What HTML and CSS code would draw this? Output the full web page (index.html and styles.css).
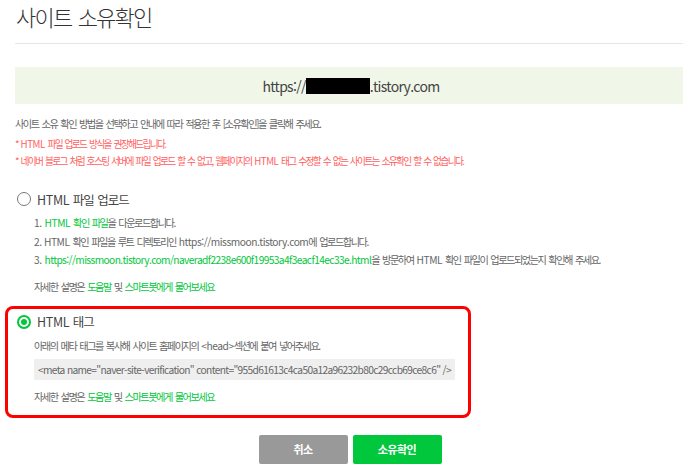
FILE: index.html
```html
<!DOCTYPE html>
<html lang="ko">
<head>
<meta charset="utf-8">
<link rel="stylesheet" href="styles.css">
</head>
<body>
<div class="page">
  <h1 class="title">사이트 소유확인</h1>
  <div class="site-box"><span class="en">https://</span><span class="redact"></span><span class="en">.tistory.com</span></div>
  <p class="desc">사이트 소유 확인 방법을 선택하고 안내에 따라 적용한 후 [소유확인]을 클릭해 주세요.</p>
  <p class="warn first">* <span class="en">HTML</span> 파일 업로드 방식을 권장해드립니다.</p>
  <p class="warn">* 네이버 블로그 처럼 호스팅 서버에 파일 업로드 할 수 없고, 웹페이지의 <span class="en">HTML</span> 태그 수정할 수 없는 사이트는 소유확인 할 수 없습니다.</p>

  <div class="option opt-file">
    <div class="opt-head"><span class="radio"></span><span class="opt-label"><span class="en">HTML</span> 파일 업로드</span></div>
    <div class="opt-body">
      <p class="line"><span class="en">1.</span> <span class="g"><span class="en">HTML</span> 확인 파일</span>을 다운로드합니다.</p>
      <p class="line"><span class="en">2. HTML</span> 확인 파일을 루트 디렉토리인 <span class="en">https://missmoon.tistory.com</span>에 업로드합니다.</p>
      <p class="line"><span class="en">3.</span> <span class="g en url">https://missmoon.tistory.com/naveradf2238e600f19953a4f3eacf14ec33e.html</span>을 방문하여 <span class="en">HTML</span> 확인 파일이 업로드되었는지 확인해 주세요.</p>
      <p class="help">자세한 설명은 <span class="g">도움말</span> 및 <span class="g">스마트봇에게 물어보세요</span></p>
    </div>
  </div>

  <div class="option opt-tag">
    <div class="opt-head"><span class="radio on"></span><span class="opt-label"><span class="en">HTML</span> 태그</span></div>
    <div class="opt-body">
      <p class="line">아래의 메타 태그를 복사해 사이트 홈페이지의 <span class="en">&lt;head&gt;</span>섹션에 붙여 넣어주세요.</p>
      <div class="code"><span class="en">&lt;meta name="naver-site-verification" content="955d61613c4ca50a12a96232b80c29ccb69ce8c6" /&gt;</span></div>
      <p class="help">자세한 설명은 <span class="g">도움말</span> 및 <span class="g">스마트봇에게 물어보세요</span></p>
    </div>
  </div>

  <div class="buttons">
    <button class="btn cancel">취소</button>
    <button class="btn ok">소유확인</button>
  </div>
</div>
</body>
</html>
```

FILE: styles.css
```css
* { box-sizing: border-box; }
html, body { margin: 0; padding: 0; background: #fff; }
body {
  font-family: "Noto Sans CJK KR", "Noto Sans", sans-serif;
  color: #666;
}
.page {
  width: 700px;
  padding: 0 17px 0 15px;
}
.en { letter-spacing: -0.45px; word-spacing: 0; }
.url { letter-spacing: -0.6px; }
.title {
  margin: 0;
  height: 44px;
  padding-top: 2px;
  padding-left: 1px;
  font-size: 22px;
  line-height: 28px;
  font-weight: 300;
  letter-spacing: -1.8px;
  word-spacing: 2px;
  color: #333;
  border-bottom: 1px solid #e6e6e6;
}
.site-box {
  margin-top: 23px;
  height: 37px;
  background: #f0f7e9;
  display: flex;
  align-items: center;
  justify-content: center;
  font-size: 14px;
  color: #444;
  padding-left: 4px;
}
.site-box .en { letter-spacing: -0.7px; }
.redact {
  display: inline-block;
  width: 64px;
  height: 16px;
  background: #000;
}
.desc, .warn, .line, .help, .code {
  font-size: 10.2px;
  letter-spacing: -1.5px;
  word-spacing: 1.6px;
}
.desc {
  margin: 12px 0 0;
  line-height: 16px;
  color: #666;
}
.warn {
  margin: 0;
  font-size: 9.7px;
  line-height: 17px;
  letter-spacing: -1.65px;
  color: #ff5e5e;
}
.warn.first { margin-top: 4px; }
.option { position: relative; }
.opt-file { margin-top: 21px; }
.opt-head {
  display: flex;
  align-items: center;
  height: 16px;
  padding-left: 2px;
}
.radio {
  width: 14px;
  height: 14px;
  border-radius: 50%;
  border: 1px solid #777;
  flex: none;
  position: relative;
}
.radio.on {
  border: 2px solid #00c73c;
}
.radio.on::after {
  content: "";
  position: absolute;
  left: 2px;
  top: 2px;
  width: 6px;
  height: 6px;
  border-radius: 50%;
  background: #00c73c;
}
.opt-label {
  margin-left: 6px;
  font-size: 12.5px;
  letter-spacing: -1px;
  word-spacing: 1px;
  color: #444;
}
.opt-label .en { letter-spacing: -0.3px; }
.opt-body { padding-left: 19px; }
.line {
  margin: 0;
  line-height: 18.5px;
  color: #666;
  white-space: nowrap;
}
.opt-file .opt-body { padding-top: 7px; }
.g { color: #00c73c; }
.help {
  margin: 0;
  line-height: 16px;
  color: #666;
}
.opt-file .help { margin-top: 9px; }
.opt-tag { margin-top: 19px; }
.opt-tag::after {
  content: "";
  position: absolute;
  left: -10px;
  top: -8px;
  width: 460px;
  height: 106px;
  border: 3px solid #f00;
  border-radius: 8px;
  pointer-events: none;
}
.opt-tag .opt-body { padding-top: 8px; }
.opt-tag .line { line-height: 16px; }
.code {
  margin-top: 5px;
  width: 421px;
  height: 21px;
  background: #efefef;
  line-height: 21px;
  padding-left: 4px;
  color: #666;
  white-space: nowrap;
}
.code .en { letter-spacing: -0.65px; word-spacing: 0; }
.opt-tag .help { margin-top: 9px; }
.buttons {
  display: flex;
  justify-content: center;
  gap: 5px;
  margin-top: 30px;
  padding-left: 2px;
}
.btn {
  width: 89px;
  height: 29px;
  border: none;
  border-radius: 2px;
  font-family: inherit;
  font-size: 11px;
  font-weight: 700;
  letter-spacing: -0.5px;
  color: #fff;
}
.cancel { background: #999; }
.ok { background: #00c73c; }
```
